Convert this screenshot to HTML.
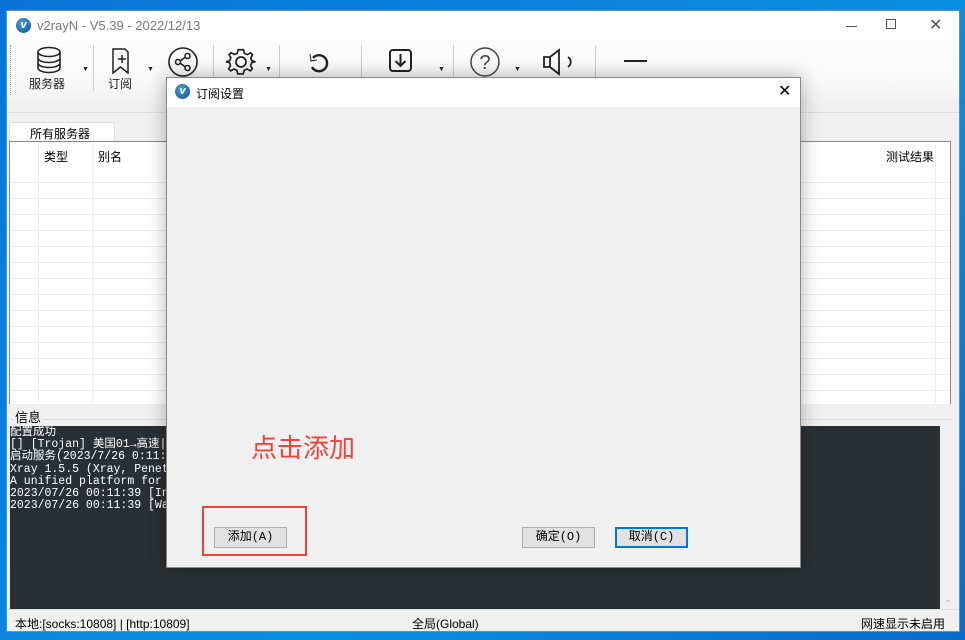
<!DOCTYPE html>
<html><head><meta charset="utf-8"><style>
*{margin:0;padding:0;box-sizing:border-box}
body{width:965px;height:640px;overflow:hidden;background:linear-gradient(135deg,#0a74d6,#0a8fe0 60%,#0a6ac8);font-family:"Liberation Sans","Noto Sans CJK SC",sans-serif;font-size:12px;color:#000;position:relative}
.abs{position:absolute}
.win{left:6px;top:10px;width:954px;height:622px;background:#f0f0f0;border:1px solid #5a8fc8}
.logo{width:15px;height:15px;border-radius:50%;background:radial-gradient(circle at 40% 35%,#4aa0d8,#0d4f86);color:#fff;font-weight:bold;font-size:11px;line-height:15px;text-align:center;font-style:italic}
.tb{font-size:12px;color:#222}
.sep{width:1px;height:46px;background:#ccc}
.arr{font-size:7px;color:#222}
.grid{background:#fff;border:1px solid #828790}
.btn{background:#e1e1e1;border:1px solid #adadad;text-align:center;font-size:12px;line-height:18px;font-family:"Liberation Mono","Noto Sans CJK SC",monospace}
.log{font-family:"Liberation Mono","Noto Sans CJK SC",monospace;font-size:11.5px;color:#fff;line-height:12.2px;white-space:pre}
</style></head><body>
<div class="abs win">
 <div class="abs" style="left:0;top:0;width:952px;height:30px;background:#fff"></div>
 <div class="abs logo" style="left:9px;top:7px">v</div>
 <div class="abs" style="left:30px;top:7px;color:#777;font-size:13px">v2rayN - V5.39 - 2022/12/13</div>
 <div class="abs" style="left:839px;top:15px;width:11px;height:1px;background:#555"></div>
 <div class="abs" style="left:879px;top:8px;width:10px;height:10px;border:1px solid #555"></div>
 <div class="abs" style="left:922px;top:4px;font-size:16px;color:#555">✕</div>
 <div class="abs" style="left:0;top:30px;width:952px;height:70px;background:linear-gradient(#fcfcfc,#f8f8f8 60%,#eee)"></div>
 <div class="abs" style="left:3px;top:34px;height:50px;border-left:1px dotted #999"></div>
 <svg class="abs" style="left:27px;top:35px" width="32" height="30" fill="none" stroke="#222" stroke-width="1.6"><ellipse cx="15" cy="6" rx="11" ry="4.5"/><path d="M4 6v16c0 2.5 5 4.5 11 4.5s11-2 11-4.5V6M4 12c0 2.5 5 4.5 11 4.5s11-2 11-4.5M4 17c0 2.5 5 4.5 11 4.5s11-2 11-4.5"/></svg>
 <div class="abs arr" style="left:75px;top:55px">▼</div>
 <div class="abs tb" style="left:22px;top:64px">服务器</div>
 <div class="sep abs" style="left:86px;top:34px"></div>
 <svg class="abs" style="left:102px;top:36px" width="24" height="28" fill="none" stroke="#222" stroke-width="1.5"><path d="M4 2h12l3 3v21l-7.5-6L4 26z"/><path d="M13 8v8M9 12h8"/></svg>
 <div class="abs arr" style="left:140px;top:55px">▼</div>
 <div class="abs tb" style="left:101px;top:64px">订阅</div>
 <svg class="abs" style="left:160px;top:35px" width="32" height="32" fill="none" stroke="#222" stroke-width="1.6"><circle cx="16" cy="16" r="14"/><circle cx="20.5" cy="10" r="2.5"/><circle cx="11" cy="16" r="2.5"/><circle cx="20.5" cy="22" r="2.5"/><path d="M13 15l5.5-4M13 17l5.5 4"/></svg>
 <div class="sep abs" style="left:206px;top:34px"></div>
 <svg class="abs" style="left:218px;top:35px" width="32" height="32" fill="none" stroke="#222" stroke-width="1.8"><circle cx="16" cy="16" r="5"/><path d="M16 3h3l1 4 3.2 1.3 3.5-2 2.2 2.2-2 3.5L28.2 15l3.8 1v0l-4 1-1.3 3.2 2 3.5-2.2 2.2-3.5-2-3.2 1.3-1 4h-6l-1-4-3.2-1.3-3.5 2-2.2-2.2 2-3.5L3.8 17 0 16l4-1 1.3-3.2-2-3.5 2.2-2.2 3.5 2L12.2 7l1-4z" transform="translate(1 1) scale(.92)"/></svg>
 <div class="abs arr" style="left:258px;top:55px">▼</div>
 <div class="sep abs" style="left:272px;top:34px"></div>
 <svg class="abs" style="left:300px;top:40px" width="24" height="24" fill="none" stroke="#222" stroke-width="2.4"><path d="M6 7a8 8 0 1 1-1 9"/><path d="M3 3l1 7 6-1" stroke-width="1"/></svg>
 <div class="sep abs" style="left:354px;top:34px"></div>
 <svg class="abs" style="left:381px;top:37px" width="26" height="26" fill="none" stroke="#222" stroke-width="2"><rect x="2" y="2" width="21" height="21" rx="3"/><path d="M12.5 6v12M7.5 13l5 5 5-5"/></svg>
 <div class="abs arr" style="left:431px;top:55px">▼</div>
 <div class="sep abs" style="left:446px;top:34px"></div>
 <svg class="abs" style="left:462px;top:35px" width="32" height="32" fill="none" stroke="#444" stroke-width="1.5"><circle cx="16" cy="16" r="14"/><text x="16" y="23" font-size="20" text-anchor="middle" fill="#444" stroke="none" font-family="Liberation Sans">?</text></svg>
 <div class="abs arr" style="left:507px;top:55px">▼</div>
 <svg class="abs" style="left:534px;top:36px" width="34" height="30" fill="none" stroke="#222" stroke-width="1.8"><path d="M3 10h6v10H3zM9 10l9-7v24l-9-7"/><path d="M27 10a6 6 0 0 1 0 10"/></svg>
 <div class="sep abs" style="left:588px;top:34px"></div>
 <div class="abs" style="left:617px;top:49px;width:23px;height:2px;background:#222"></div>
 <div class="abs" style="left:0;top:101px;width:952px;height:1px;background:#ddd"></div>
 <div class="abs" style="left:2px;top:111px;width:106px;height:19px;background:#fff;border:1px solid #ddd;border-bottom:none;padding:2px 0 0 20px">所有服务器</div>
 <div class="abs grid" style="left:2px;top:130px;width:942px;height:263px">
  <div class="abs" style="left:0;top:40px;width:940px;height:222px;background:repeating-linear-gradient(#ececec 0 1px,#fff 1px 16px)"></div>
  <div class="abs" style="left:28px;top:2px;width:1px;height:259px;background:#ececec"></div>
  <div class="abs" style="left:82px;top:2px;width:1px;height:259px;background:#ececec"></div>
  <div class="abs" style="left:925px;top:2px;width:1px;height:259px;background:#ececec"></div>
  <div class="abs" style="left:34px;top:6px">类型</div>
  <div class="abs" style="left:88px;top:6px">别名</div>
  <div class="abs" style="left:876px;top:6px">测试结果</div>
 </div>
 <div class="abs" style="left:2px;top:408px;width:942px;height:1px;background:#ddd"></div>
 <div class="abs" style="left:6px;top:396px;background:#f0f0f0;padding:0 2px;font-size:13px">信息</div>
 <div class="abs" style="left:3px;top:415px;width:930px;height:183px;background:#293034"></div>
 <div class="abs" style="left:933px;top:415px;width:17px;height:183px;background:#f0f0f0"></div>
 <div class="abs" style="left:937px;top:583px;font-size:9px;color:#aaa">⌄</div>
 <div class="abs log" style="left:3px;top:416px">配置成功
[] [Trojan] 美国01→高速|解
启动服务(2023/7/26 0:11:39
Xray 1.5.5 (Xray, Penetrat
A unified platform for ant
2023/07/26 00:11:39 [Info]
2023/07/26 00:11:39 [Warni</div>
 <div class="abs" style="left:0;top:598px;width:952px;height:1px;background:#ddd"></div>
 <div class="abs" style="left:8px;top:604px">本地:[socks:10808] | [http:10809]</div>
 <div class="abs" style="left:405px;top:604px">全局(Global)</div>
 <div class="abs" style="left:854px;top:604px">网速显示未启用</div>
</div>
<div class="abs" style="left:166px;top:77px;width:635px;height:491px;background:#f0f0f0;border:1px solid #888;box-shadow:0 0 18px rgba(0,0,0,.3)">
 <div class="abs" style="left:0;top:0;width:633px;height:29px;background:#fff"></div>
 <div class="abs logo" style="left:8px;top:6px">v</div>
 <div class="abs" style="left:29px;top:7px">订阅设置</div>
 <div class="abs" style="left:611px;top:3px;font-size:16px">✕</div>
 <div class="abs" style="left:84px;top:350px;color:#f44336;font-size:26px">点击添加</div>
 <div class="abs" style="left:35px;top:428px;width:105px;height:50px;border:2px solid #ee4436"></div>
 <div class="abs btn" style="left:47px;top:449px;width:73px;height:21px">添加(A)</div>
 <div class="abs btn" style="left:355px;top:449px;width:73px;height:21px">确定(O)</div>
 <div class="abs btn" style="left:448px;top:449px;width:73px;height:21px;border:2px solid #0078d7;line-height:17px">取消(C)</div>
</div>
</body></html>
